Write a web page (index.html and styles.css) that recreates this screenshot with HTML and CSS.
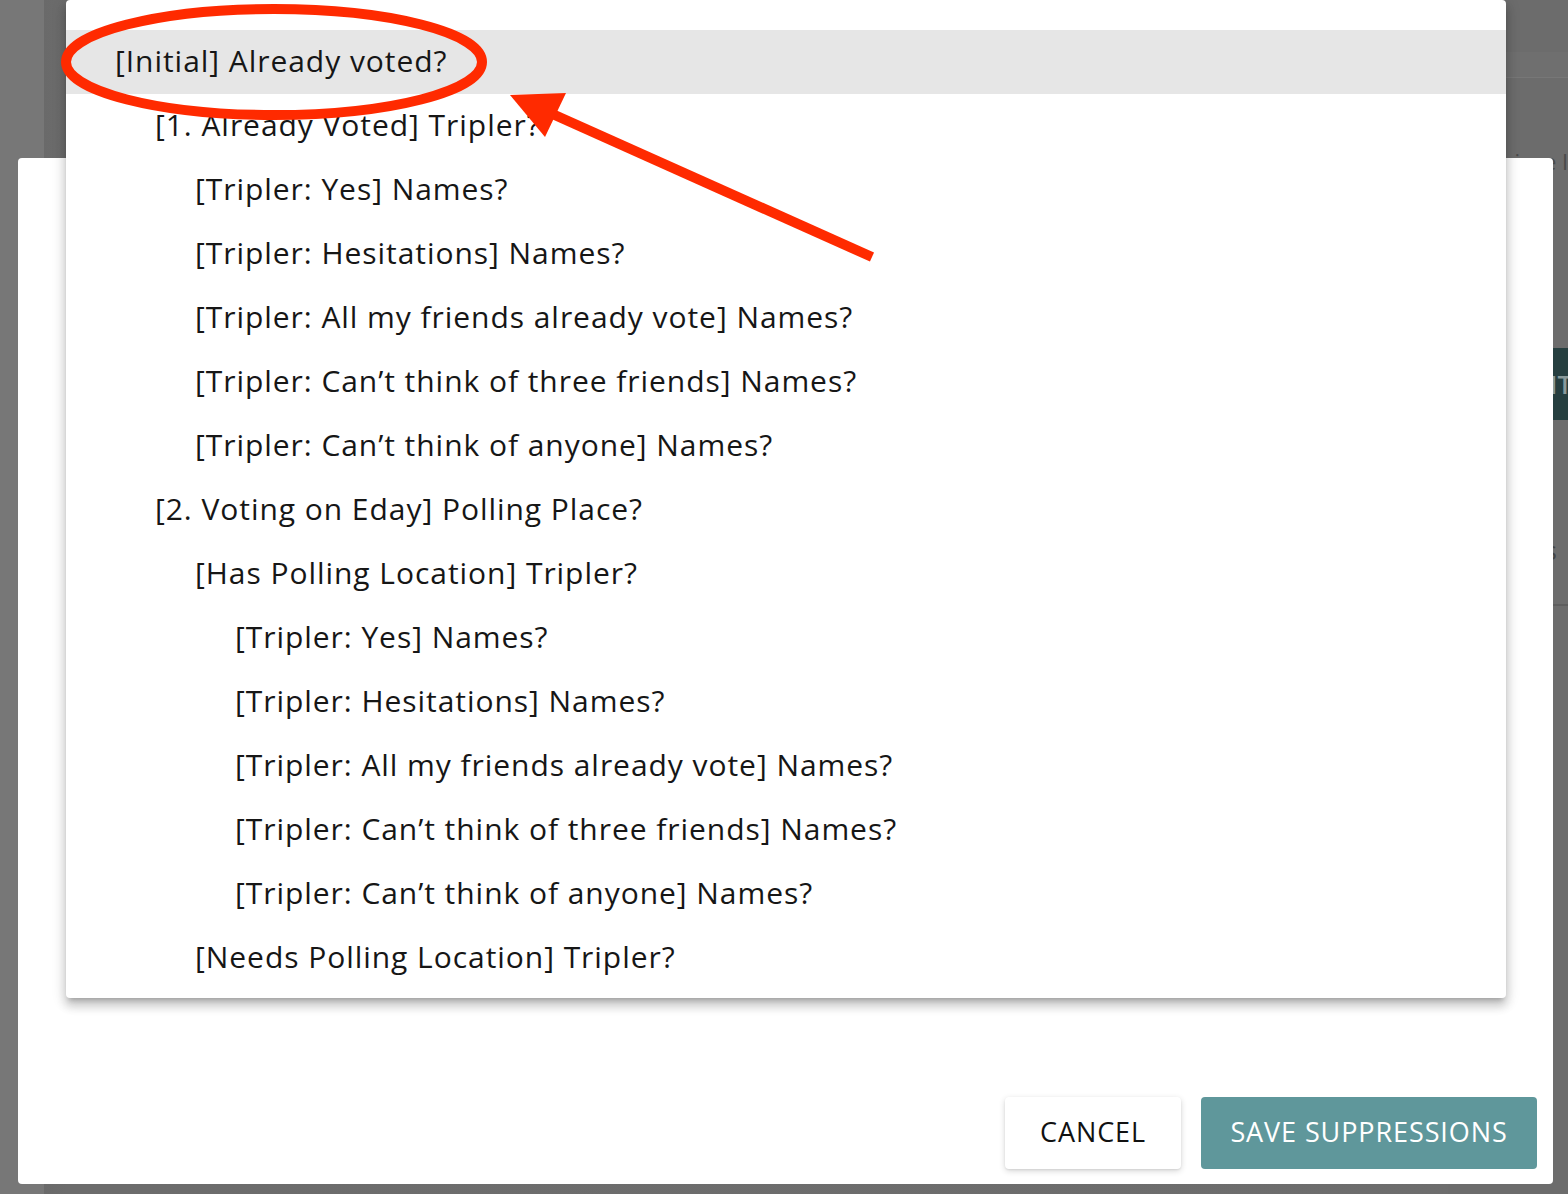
FILE: index.html
```html
<!DOCTYPE html>
<html lang="en">
<head>
<meta charset="utf-8">
<title>Suppressions</title>
<link rel="stylesheet" href="styles.css">
</head>
<body>
<div class="page">
  <div class="side">
    <div class="band"></div>
    <div class="side-label">since last</div>
    <div class="side-btn">EDIT</div>
    <div class="side-text">Questions</div>
    <div class="side-rule"></div>
  </div>
</div>

<div class="dialog">
  <div class="actions">
    <button class="btn btn-cancel">CANCEL</button>
    <button class="btn btn-save">SAVE SUPPRESSIONS</button>
  </div>
</div>

<ul class="menu">
  <li class="item selected lvl0">[Initial] Already voted?</li>
  <li class="item lvl1">[1. Already Voted] Tripler?</li>
  <li class="item lvl2">[Tripler: Yes] Names?</li>
  <li class="item lvl2">[Tripler: Hesitations] Names?</li>
  <li class="item lvl2">[Tripler: All my friends already vote] Names?</li>
  <li class="item lvl2">[Tripler: Can’t think of three friends] Names?</li>
  <li class="item lvl2">[Tripler: Can’t think of anyone] Names?</li>
  <li class="item lvl1">[2. Voting on Eday] Polling Place?</li>
  <li class="item lvl2">[Has Polling Location] Tripler?</li>
  <li class="item lvl3">[Tripler: Yes] Names?</li>
  <li class="item lvl3">[Tripler: Hesitations] Names?</li>
  <li class="item lvl3">[Tripler: All my friends already vote] Names?</li>
  <li class="item lvl3">[Tripler: Can’t think of three friends] Names?</li>
  <li class="item lvl3">[Tripler: Can’t think of anyone] Names?</li>
  <li class="item lvl2">[Needs Polling Location] Tripler?</li>
</ul>

<svg class="annot" width="1568" height="1194" viewBox="0 0 1568 1194">
  <ellipse cx="274" cy="62" rx="208" ry="53" fill="none" stroke="#ff2a00" stroke-width="10"/>
  <line x1="872" y1="257" x2="548" y2="112" stroke="#ff2a00" stroke-width="10"/>
  <polygon points="510,95 566,93 545,137" fill="#ff2a00"/>
</svg>
</body>
</html>
```

FILE: styles.css
```css
* { box-sizing: border-box; }

html, body {
  margin: 0;
  padding: 0;
}

body {
  width: 1568px;
  height: 1194px;
  overflow: hidden;
  position: relative;
  background: #6d6d6d;
  font-family: "Open Sans", "Liberation Sans", sans-serif;
}

.page {
  height: 1194px;
  display: flex;
  justify-content: flex-end;
  background: linear-gradient(to right, #777 0, #777 44px, #6a6a6a 44px, #6c6c6c 66px, #6d6d6d 100%);
}

.side {
  width: 120px;
  display: flex;
  flex-direction: column;
  background: #6c6c6c;
}

.band {
  height: 26px;
  margin-top: 52px;
  background: #6f6f6f;
  border-bottom: 1px solid #777;
}

.side-label {
  margin-top: 68px;
  margin-left: 56px;
  font-size: 22px;
  color: #4a4a4a;
  white-space: nowrap;
}

.side-btn {
  margin-top: 172px;
  height: 72px;
  margin-left: 65px;
  background: #263f40;
  color: #8a9a9a;
  font-size: 26px;
  line-height: 72px;
  padding-left: 3px;
  font-weight: 600;
  overflow: hidden;
}

.side-text {
  margin-top: 112px;
  margin-left: -14px;
  font-size: 26px;
  color: #444;
  white-space: nowrap;
}

.side-rule {
  margin-top: 36px;
  height: 2px;
  background: #5e5e5e;
}

.dialog {
  position: absolute;
  left: 18px;
  top: 158px;
  width: 1535px;
  height: 1026px;
  background: #fff;
  border-radius: 4px;
  display: flex;
  flex-direction: column;
  justify-content: flex-end;
}

.actions {
  display: flex;
  justify-content: flex-end;
  gap: 20px;
  padding: 0 16px 15px 0;
}

.btn {
  height: 72px;
  border: none;
  border-radius: 4px;
  font-family: "Open Sans", "Liberation Sans", sans-serif;
  font-size: 27px;
  letter-spacing: 0.9px;
  padding: 0 0 4px;
  cursor: pointer;
}

.btn-cancel {
  width: 176px;
  background: #fff;
  color: #111;
  box-shadow: 0 2px 6px rgba(0, 0, 0, 0.16), 0 1px 2px rgba(0, 0, 0, 0.08);
}

.btn-save {
  width: 336px;
  background: #5f979b;
  color: #fff;
}

.menu {
  position: absolute;
  left: 66px;
  top: 0;
  width: 1440px;
  margin: 0;
  padding: 30px 0 8px;
  list-style: none;
  background: #fff;
  border-radius: 4px;
  box-shadow: 0 5px 5px -3px rgba(0,0,0,0.2), 0 8px 10px 1px rgba(0,0,0,0.14), 0 3px 14px 2px rgba(0,0,0,0.12);
}

.item {
  height: 64px;
  line-height: 62px;
  padding-bottom: 2px;
  font-size: 30px;
  letter-spacing: 0.95px;
  color: #161616;
  white-space: nowrap;
}

.selected { background: #e6e6e6; }

.lvl0 { padding-left: 49px; }
.lvl1 { padding-left: 89px; }
.lvl2 { padding-left: 129px; }
.lvl3 { padding-left: 169px; }

.annot {
  position: absolute;
  left: 0;
  top: 0;
  pointer-events: none;
}
```
